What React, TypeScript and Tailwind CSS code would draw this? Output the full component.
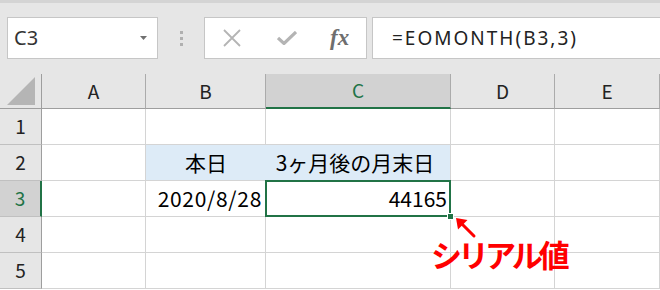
import React from "react";

const COLS = ["A", "B", "C", "D", "E"];
const CJK = { fontFamily: '"Noto Sans CJK JP", "Noto Sans", sans-serif' };

// ── Toolbar (name box + formula bar) ───────────────────────────
function Toolbar() {
  return (
    <div className="bg-[#e6e6e6]">
      <div className="h-[3px] bg-[#d4d4d4]" />
      <div className="flex h-[71px] items-start pt-[14px] pl-[7px]">
        {/* Name box */}
        <div className="flex h-[42px] w-[151px] items-center justify-between border border-[#c6c6c6] bg-white pl-[6px] pr-[10px]">
          <span className="text-[20px] text-[#333]" style={{ fontFamily: '"Noto Sans", sans-serif' }}>
            C3
          </span>
          <svg width="7" height="4" viewBox="0 0 7 4">
            <path d="M0 0H7L3.5 4Z" fill="#707070" />
          </svg>
        </div>

        {/* Dots */}
        <div className="flex h-[42px] w-[46px] flex-col items-center justify-center gap-[3px]">
          <div className="h-[3px] w-[3px] bg-[#b0b0b0]" />
          <div className="h-[3px] w-[3px] bg-[#b0b0b0]" />
          <div className="h-[3px] w-[3px] bg-[#b0b0b0]" />
        </div>

        {/* Cancel / enter / fx */}
        <div className="flex h-[42px] w-[163px] items-center border border-[#c6c6c6] bg-white">
          <svg className="ml-[18px]" width="18" height="18" viewBox="0 0 18 18">
            <path d="M1 1L17 17M17 1L1 17" stroke="#b4b4b4" strokeWidth="1.8" />
          </svg>
          <svg className="ml-[36px]" width="20" height="14" viewBox="0 0 20 14">
            <path d="M1 7L7 12.5L19 1" stroke="#b4b4b4" strokeWidth="3.2" fill="none" />
          </svg>
          <span
            className="ml-[33px] text-[23px] font-bold italic text-[#6e6e6e]"
            style={{ fontFamily: '"Liberation Serif", serif' }}
          >
            fx
          </span>
        </div>

        {/* Formula input */}
        <div className="ml-[5px] flex h-[42px] flex-1 items-center border border-r-0 border-[#c6c6c6] bg-white pl-[19px]">
          <span className="text-[19px] tracking-[2px] text-[#222]" style={{ fontFamily: '"Noto Sans", sans-serif' }}>
            =EOMONTH(B3,3)
          </span>
        </div>
      </div>
    </div>
  );
}

// ── Grid ───────────────────────────────────────────────────────
function Sheet() {
  const cell = "border-r border-b border-[#d4d4d4] bg-white";
  const rowHead = "flex items-center justify-center border-b border-r border-[#c0c0c0] border-r-[#9e9e9e] bg-[#e6e6e6] text-[19px] text-[#222]";

  return (
    <div className="relative grid grid-cols-[42px_104px_120px_185px_104px_105px] grid-rows-[35px_repeat(5,36px)]" style={CJK}>
      {/* Corner */}
      <div className="flex items-end justify-center border-r border-b border-[#9e9e9e] bg-[#e6e6e6] pb-[3px]">
        <svg width="28" height="28" viewBox="0 0 28 28">
          <path d="M28 0V28H0Z" fill="#b5b5b5" />
        </svg>
      </div>

      {/* Column headers */}
      {COLS.map((c) =>
        c === "C" ? (
          <div key={c} className="flex items-center justify-center border-r border-[#ababab] border-b-2 border-b-[#217346] bg-[#d2d2d2] text-[19px] text-[#217346]">
            {c}
          </div>
        ) : (
          <div key={c} className="flex items-center justify-center border-r border-b border-[#ababab] border-b-[#9e9e9e] bg-[#e6e6e6] text-[19px] text-[#222]">
            {c}
          </div>
        )
      )}

      {/* Row 1 */}
      <div className={rowHead}>1</div>
      <div className={cell} />
      <div className={cell} />
      <div className={cell} />
      <div className={cell} />
      <div className={cell} />

      {/* Row 2 */}
      <div className={rowHead}>2</div>
      <div className={cell} />
      <div className="flex items-center justify-center border-b border-[#d4d4d4] bg-[#ddebf7] text-[21px] text-black">本日</div>
      <div className="flex items-center justify-center border-r border-b border-[#d4d4d4] bg-[#ddebf7] pr-[6px] text-[21px] text-black">
        3ヶ月後の月末日
      </div>
      <div className={cell} />
      <div className={cell} />

      {/* Row 3 */}
      <div className="flex items-center justify-center border-b border-[#c0c0c0] border-r-2 border-r-[#217346] bg-[#d2d2d2] text-[19px] text-[#217346]">
        3
      </div>
      <div className={cell} />
      <div className={`${cell} flex items-center justify-end pr-[3px] text-[21px] tracking-[0.7px] text-black`}>2020/8/28</div>
      <div className={`${cell} relative flex items-center justify-end pr-[3px] text-[21px] text-black`}>
        44165
        <div className="pointer-events-none absolute -top-[1px] -left-[1px] right-[-1px] bottom-[-1px] border-2 border-[#217346]" />
        <div className="absolute -right-[4px] -bottom-[4px] h-[7px] w-[7px] border border-white bg-[#217346]" />
      </div>
      <div className={cell} />
      <div className={cell} />

      {/* Rows 4, 5 */}
      {[4, 5].map((r) => (
        <React.Fragment key={r}>
          <div className={rowHead}>{r}</div>
          <div className={cell} />
          <div className={cell} />
          <div className={cell} />
          <div className={cell} />
          <div className={cell} />
        </React.Fragment>
      ))}

      {/* Annotation */}
      <svg className="absolute left-[450px] top-[138px]" width="30" height="30" viewBox="0 0 30 30">
        <path d="M24 24L10 10" stroke="#ff0000" strokeWidth="3" strokeLinecap="round" />
        <path d="M6 6L8 17.5L17.5 8Z" fill="#ff0000" />
      </svg>
      <div
        className="absolute left-[431px] top-[164px] whitespace-nowrap text-[31px] font-bold leading-none tracking-[-4px] text-[#ff0000]"
        style={CJK}
      >
        シリアル値
      </div>
    </div>
  );
}

export default function App() {
  return (
    <div className="h-[290px] w-[660px] overflow-hidden bg-white">
      <Toolbar />
      <Sheet />
    </div>
  );
}
